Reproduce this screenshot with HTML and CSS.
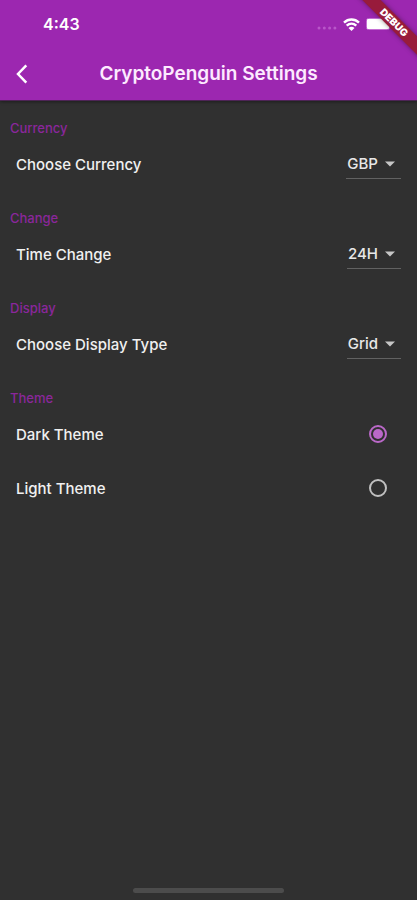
FILE: index.html
```html
<!DOCTYPE html>
<html lang="en">
<head>
<meta charset="utf-8">
<meta name="viewport" content="width=device-width, initial-scale=1">
<title>CryptoPenguin Settings</title>
<link rel="stylesheet" href="styles.css">
</head>
<body>
<div class="app">
  <header class="header">
    <div class="status">
      <span class="time">4:43</span>
      <div class="indicators">
        <svg class="signal" width="20" height="4" viewBox="0 0 20 4" aria-hidden="true"><g fill="#b956c9"><circle cx="2" cy="2" r="1.500"/><circle cx="7.3" cy="2" r="1.500"/><circle cx="12.6" cy="2" r="1.500"/><circle cx="17.9" cy="2" r="1.500"/></g></svg>
        <svg class="wifi" width="17" height="13" viewBox="0 0 17 13" aria-hidden="true"><g fill="none" stroke="#fff" stroke-width="2.400"><path d="M1 4.6C5.3.4 11.7.4 16 4.6"/><path d="M3.7 7.6c2.8-2.6 6.8-2.6 9.6 0"/></g><path d="M8.500 12.900 5.500 9.900c1.700-1.600 4.300-1.600 6 0z" fill="#fff"/></svg>
        <svg class="battery" width="26" height="12" viewBox="0 0 26 12" aria-hidden="true"><rect x=".5" y=".5" width="23" height="11" rx="2" fill="none" stroke="#c56fd4"/><rect x="1" y="1" width="22" height="10" rx="1" fill="#fff"/></svg>
      </div>
    </div>
    <div class="bar">
      <button class="back" type="button" aria-label="Back"><svg width="12" height="20" viewBox="0 0 12 20" aria-hidden="true"><path d="M10.300 1.300 2 10l8.300 8.700" fill="none" stroke="#fff" stroke-width="2.500"/></svg></button>
      <h1 class="title">CryptoPenguin Settings</h1>
    </div>
    <div class="ribbon"><span class="ribbon-text">DEBUG</span></div>
  </header>
  <main class="settings">
    <section>
      <h2 class="heading">Currency</h2>
      <div class="row">
        <label for="currency">Choose Currency</label>
        <div class="dropdown">
          <select id="currency"><option>GBP</option></select>
          <svg class="arrow" width="10" height="6" viewBox="0 0 10 6" aria-hidden="true"><path d="M0 .5h10l-5 5z" fill="#c6c6c6"/></svg>
        </div>
      </div>
    </section>
    <section>
      <h2 class="heading">Change</h2>
      <div class="row">
        <label for="period">Time Change</label>
        <div class="dropdown">
          <select id="period"><option>24H</option></select>
          <svg class="arrow" width="10" height="6" viewBox="0 0 10 6" aria-hidden="true"><path d="M0 .5h10l-5 5z" fill="#c6c6c6"/></svg>
        </div>
      </div>
    </section>
    <section>
      <h2 class="heading">Display</h2>
      <div class="row">
        <label for="display">Choose Display Type</label>
        <div class="dropdown">
          <select id="display"><option>Grid</option></select>
          <svg class="arrow" width="10" height="6" viewBox="0 0 10 6" aria-hidden="true"><path d="M0 .5h10l-5 5z" fill="#c6c6c6"/></svg>
        </div>
      </div>
    </section>
    <section>
      <h2 class="heading">Theme</h2>
      <div class="row">
        <label for="dark">Dark Theme</label>
        <input class="radio" type="radio" name="theme" id="dark" checked>
      </div>
      <div class="row">
        <label for="light">Light Theme</label>
        <input class="radio" type="radio" name="theme" id="light">
      </div>
    </section>
  </main>
  <div class="home"></div>
</div>
</body>
</html>
```
FILE: styles.css
```css
* {
  box-sizing: border-box;
}

body {
  margin: 0;
  background: #303030;
  color: #fff;
  font-family: Inter, "Liberation Sans", sans-serif;
}

.app {
  display: flex;
  flex-direction: column;
  min-height: 100vh;
}

.header {
  position: relative;
  overflow: hidden;
  background: #9c27b0;
  border-bottom: 1px solid #4d2455;
  box-shadow: 0 1px 3px rgba(0, 0, 0, 0.4);
}

.status {
  display: flex;
  align-items: center;
  justify-content: space-between;
  height: 48px;
  padding: 0 25px 0 43px;
}

.time {
  font-size: 16px;
  font-weight: 600;
}

.indicators {
  display: flex;
  align-items: center;
  gap: 6px;
}

.signal {
  margin-top: 8px;
}

.bar {
  display: grid;
  grid-template-columns: 44px 1fr 44px;
  align-items: center;
  height: 52px;
}

.back {
  display: flex;
  align-items: center;
  height: 44px;
  padding: 0 16px;
  border: 0;
  background: none;
}

.title {
  margin: 0;
  color: #fdeaff;
  font-size: 19px;
  font-weight: 600;
  line-height: 24px;
  text-align: center;
}

.ribbon {
  position: absolute;
  top: 16px;
  right: -32px;
  width: 110px;
  height: 13px;
  background: #981b3b;
  box-shadow: 0 0 5px rgba(0, 0, 0, 0.4);
  transform: rotate(45deg);
  text-align: center;
}

.ribbon-text {
  display: block;
  font-size: 10px;
  font-weight: 900;
  line-height: 13px;
}

.settings {
  flex: 1;
}

.heading {
  margin: 0;
  padding: 18px 10px 0;
  color: #8a279b;
  font-size: 13px;
  font-weight: 500;
  line-height: 18px;
}

.row {
  display: flex;
  align-items: center;
  justify-content: space-between;
  height: 54px;
  padding: 0 16px;
  color: #f0f0f0;
  font-size: 15px;
  font-weight: 500;
}

.dropdown {
  position: relative;
}

select {
  display: block;
  height: 30px;
  padding: 0 23px 0 1px;
  border: 0;
  border-bottom: 1px solid #626262;
  border-radius: 0;
  appearance: none;
  field-sizing: content;
  background: none;
  color: #e8e8e8;
  font: inherit;
}

.arrow {
  position: absolute;
  top: 12px;
  right: 6px;
  pointer-events: none;
}

.radio {
  display: grid;
  place-items: center;
  width: 18px;
  height: 18px;
  margin: 0 14px 0 0;
  border: 2px solid #c0c0c0;
  border-radius: 50%;
  appearance: none;
}

.radio:checked {
  border-color: #ba68c8;
}

.radio:checked::before {
  width: 10px;
  height: 10px;
  border-radius: 50%;
  background: #ba68c8;
  content: "";
}

.home {
  width: 36%;
  height: 5px;
  margin: 0 auto 7px;
  border-radius: 3px;
  background: #4c4c4c;
}
```
